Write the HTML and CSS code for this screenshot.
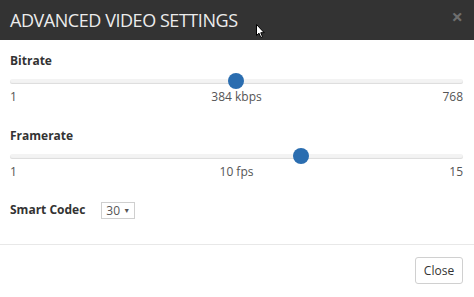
FILE: index.html
```html
<!DOCTYPE html>
<html>
<head>
<meta charset="utf-8">
<link rel="stylesheet" href="styles.css">
</head>
<body>
<div class="modal">
  <div class="header">
    <div class="title">ADVANCED VIDEO SETTINGS</div>
    <div class="close-x">×</div>
  </div>
  <div class="body">
    <div class="group">
      <div class="label">Bitrate</div>
      <div class="slider">
        <div class="track"></div>
        <div class="thumb" style="left: 49.93%"></div>
      </div>
      <div class="values"><span>1</span><span class="mid">384 kbps</span><span class="end">768</span></div>
    </div>
    <div class="group second">
      <div class="label">Framerate</div>
      <div class="slider">
        <div class="track"></div>
        <div class="thumb" style="left: 64.29%"></div>
      </div>
      <div class="values"><span>1</span><span class="mid">10 fps</span><span class="end">15</span></div>
    </div>
    <div class="codec">
      <div class="label">Smart Codec</div>
      <div class="select">30 <span class="caret">▼</span></div>
    </div>
  </div>
  <div class="footer">
    <div class="btn">Close</div>
  </div>
  <svg class="cursor" width="10" height="15" viewBox="0 0 10 15"><path d="M0.5 0.5 L0.5 11.5 L3 9.2 L4.8 13.5 L6.5 12.8 L4.8 8.7 L8.2 8.7 Z" fill="#fff" stroke="#000" stroke-width="1"/></svg>
</div>
</body>
</html>
```
FILE: styles.css
```css
html, body {
  margin: 0;
  padding: 0;
  background: #fff;
}
body {
  font-family: "Open Sans", "Liberation Sans", sans-serif;
  color: #333;
}
.modal {
  position: relative;
  width: 474px;
  height: 297px;
  display: flex;
  flex-direction: column;
}
.header {
  height: 40px;
  background: #333333;
  display: flex;
  align-items: center;
  justify-content: space-between;
  padding: 0 10px;
  box-sizing: border-box;
}
.title {
  color: #ececec;
  font-size: 18px;
  font-weight: 400;
  letter-spacing: -0.45px;
}
.close-x {
  color: #6e6e6e;
  font-size: 20px;
  font-weight: 700;
  line-height: 20px;
  margin-top: -6px;
  margin-right: 1px;
}
.body {
  padding: 13px 11px 24px 10px;
  display: flex;
  flex-direction: column;
}
.label {
  font-size: 12px;
  font-weight: 700;
  line-height: 16px;
  color: #333;
}
.slider {
  position: relative;
  height: 16px;
  margin-top: 4px;
  display: flex;
  align-items: center;
}
.track {
  flex: 1;
  height: 5px;
  border-radius: 3px;
  background: #f3f3f3;
  box-shadow: inset 0 -1px 1px #dcdcdc;
}
.thumb {
  position: absolute;
  top: 0;
  width: 16px;
  height: 16px;
  border-radius: 50%;
  background: #2a6db0;
  transform: translateX(-50%);
}
.values {
  display: grid;
  grid-template-columns: 1fr auto 1fr;
  font-size: 12px;
  line-height: 16px;
  color: #555;
}
.values .end {
  text-align: right;
}
.second {
  margin-top: 23px;
}
.codec {
  margin-top: 20px;
  display: flex;
  align-items: center;
  height: 20px;
}
.select {
  margin-left: 16px;
  height: 17px;
  box-sizing: border-box;
  border: 1px solid #cfcfcf;
  padding: 0 4px;
  font-size: 12px;
  line-height: 15px;
  color: #555;
}
.caret {
  font-size: 7px;
  vertical-align: 2px;
}
.footer {
  border-top: 1px solid #e8e8e8;
  padding: 12px 11px 0 0;
  display: flex;
  justify-content: flex-end;
}
.btn {
  width: 48px;
  height: 27px;
  box-sizing: border-box;
  border: 1px solid #d0d0d0;
  border-radius: 3px;
  font-size: 12px;
  line-height: 25px;
  text-align: center;
  color: #333;
}
.cursor {
  position: absolute;
  left: 256px;
  top: 24px;
}
```
